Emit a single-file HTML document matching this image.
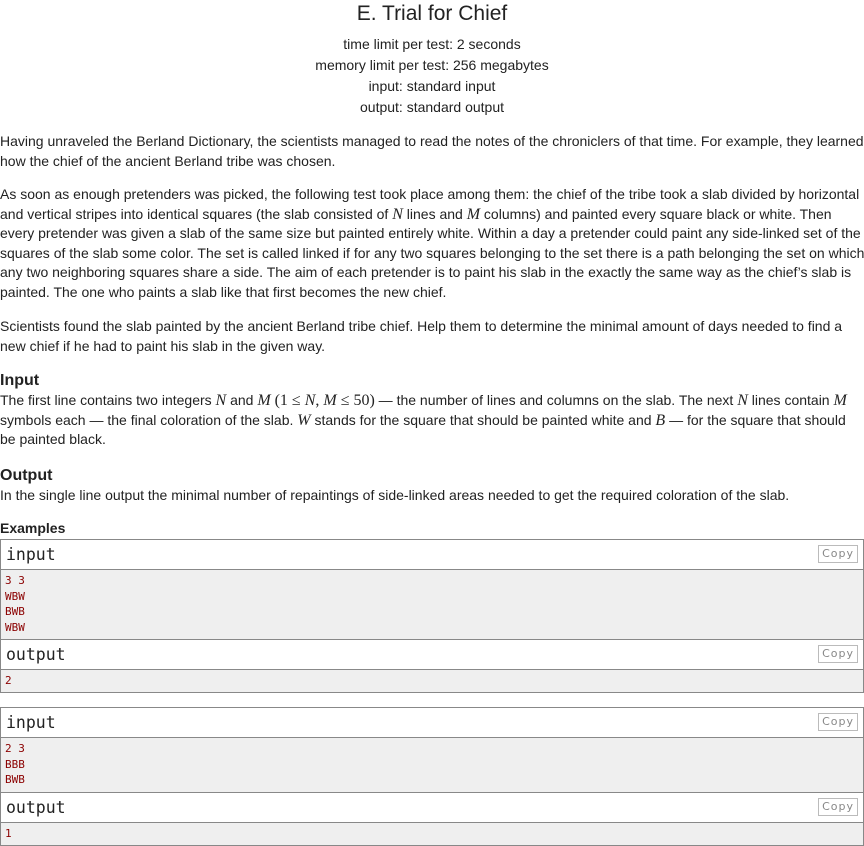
<!DOCTYPE html>
<html><head><meta charset="utf-8"><style>
body{margin:0;width:864px;height:846px;background:#fff;font-family:"Liberation Sans",Arial,sans-serif;color:#222;position:relative;overflow:hidden}
.a{position:absolute;left:0;white-space:nowrap;font-size:14px;line-height:19.6px}
.c{width:864px;text-align:center}
.m{font-family:"Liberation Serif",serif;font-style:italic;font-size:16px}
.r{font-family:"Liberation Serif",serif;font-size:16px}
.h{font-weight:bold;font-size:16px}
.box{position:absolute;left:0;width:862px;border:1px solid #888}
.hd{height:29px;border-bottom:1px solid #888;position:relative;font-family:"DejaVu Sans Mono","Liberation Mono",monospace;font-size:16.5px;line-height:29px;padding-left:5px}
.dt{background:#efefef;font-family:"DejaVu Sans Mono","Liberation Mono",monospace;font-size:11px;color:#8b0000;line-height:15.6px;padding:3px 4px;white-space:pre}
.cp{position:absolute;right:5px;top:5px;border:1px solid #bbb;font-size:11px;line-height:16px;padding:0 3px;color:#888;font-family:"DejaVu Sans","Liberation Sans",sans-serif;letter-spacing:1px;background:#fff}
</style></head><body>
<div class="a c" style="top:2px;font-size:21px;line-height:24px">E. Trial for Chief</div>
<div class="a c" style="top:34px;line-height:21px">time limit per test: 2 seconds<br>memory limit per test: 256 megabytes<br>input: standard input<br>output: standard output</div>
<div class="a" style="top:132px">Having unraveled the Berland Dictionary, the scientists managed to read the notes of the chroniclers of that time. For example, they learned<br>how the chief of the ancient Berland tribe was chosen.</div>
<div class="a" style="top:185px">As soon as enough pretenders was picked, the following test took place among them: the chief of the tribe took a slab divided by horizontal<br>and vertical stripes into identical squares (the slab consisted of <span class="m">N</span> lines and <span class="m">M</span> columns) and painted every square black or white. Then<br>every pretender was given a slab of the same size but painted entirely white. Within a day a pretender could paint any side-linked set of the<br>squares of the slab some color. The set is called linked if for any two squares belonging to the set there is a path belonging the set on which<br>any two neighboring squares share a side. The aim of each pretender is to paint his slab in the exactly the same way as the chief’s slab is<br>painted. The one who paints a slab like that first becomes the new chief.</div>
<div class="a" style="top:317px">Scientists found the slab painted by the ancient Berland tribe chief. Help them to determine the minimal amount of days needed to find a<br>new chief if he had to paint his slab in the given way.</div>
<div class="a h" style="top:371px">Input</div>
<div class="a" style="top:391px">The first line contains two integers <span class="m">N</span> and <span class="m">M</span> <span class="r">(1 ≤ <i>N</i>, <i>M</i> ≤ 50)</span> — the number of lines and columns on the slab. The next <span class="m">N</span> lines contain <span class="m">M</span><br>symbols each — the final coloration of the slab. <span class="m">W</span> stands for the square that should be painted white and <span class="m">B</span> — for the square that should<br>be painted black.</div>
<div class="a h" style="top:466px">Output</div>
<div class="a" style="top:486px">In the single line output the minimal number of repaintings of side-linked areas needed to get the required coloration of the slab.</div>
<div class="a" style="top:519px;font-weight:bold;font-size:14px">Examples</div>
<div class="box" style="top:539px">
<div class="hd">input<span class="cp">Copy</span></div>
<div class="dt" style="height:63px">3 3
WBW
BWB
WBW</div>
<div class="hd" style="border-top:1px solid #888">output<span class="cp">Copy</span></div>
<div class="dt" style="height:16px">2</div>
</div>
<div class="box" style="top:707px">
<div class="hd">input<span class="cp">Copy</span></div>
<div class="dt" style="height:48px">2 3
BBB
BWB</div>
<div class="hd" style="border-top:1px solid #888">output<span class="cp">Copy</span></div>
<div class="dt" style="height:16px">1</div>
</div>
</body></html>
